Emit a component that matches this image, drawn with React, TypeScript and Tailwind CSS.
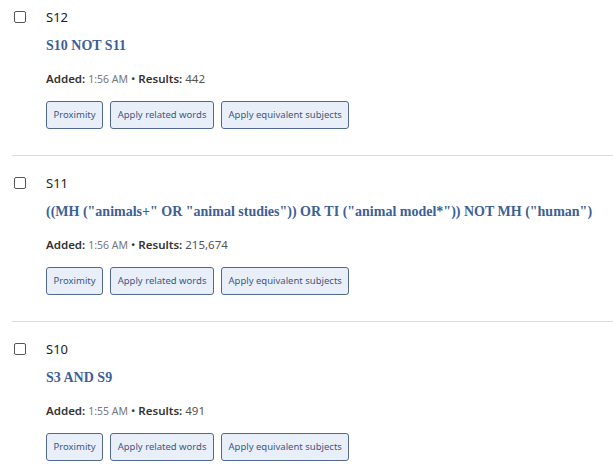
import React from "react";

type Item = { id: string; query: string; time: string; results: string };

const items: Item[] = [
  { id: "S12", query: "S10 NOT S11", time: "1:56 AM", results: "442" },
  {
    id: "S11",
    query: '((MH ("animals+" OR "animal studies")) OR TI ("animal model*")) NOT MH ("human")',
    time: "1:56 AM",
    results: "215,674",
  },
  { id: "S10", query: "S3 AND S9", time: "1:55 AM", results: "491" },
];

function Btn({ children }: { children: React.ReactNode }) {
  return (
    <button className="h-[28px] px-[6.5px] rounded-[3px] border border-[#52698f] bg-[#e9eff9] text-[9.5px] text-[#3e5782] leading-none whitespace-nowrap">
      {children}
    </button>
  );
}

function Row({ item, first, last }: { item: Item; first: boolean; last: boolean }) {
  return (
    <div className={"ml-[12px] " + (last ? "" : "border-b border-[#dcdcdc]")}>
      <div className={"flex items-start pb-[26px] " + (first ? "pt-[10px]" : "pt-[20px]")}>
        <div className="w-[34px] shrink-0 pl-[2px] pt-[1px]">
          <div className="w-[12px] h-[12px] border border-[#555] rounded-[2px] bg-white" />
        </div>
        <div className="flex flex-col min-w-0">
          <div className="text-[13px] leading-[14px] text-[#222]">{item.id}</div>
          <div
            className="mt-[14px] text-[14px] leading-[16px] font-bold text-[#3d5f97] whitespace-nowrap"
            style={{ fontFamily: '"Liberation Serif", serif' }}
          >
            {item.query}
          </div>
          <div className="mt-[19px] text-[11.5px] leading-[12px] text-[#333]">
            <span className="font-semibold">Added:</span>{" "}
            <span className="text-[10.5px] text-[#777]">{item.time}</span>{" "}
            <span>•</span> <span className="font-semibold">Results:</span>{" "}
            <span className="text-[#555]">{item.results}</span>
          </div>
          <div className="mt-[16px] flex gap-[7px]">
            <Btn>Proximity</Btn>
            <Btn>Apply related words</Btn>
            <Btn>Apply equivalent subjects</Btn>
          </div>
        </div>
      </div>
    </div>
  );
}

export default function App() {
  return (
    <div
      className="w-[613px] h-[472px] overflow-hidden bg-white"
      style={{ fontFamily: '"Noto Sans", sans-serif' }}
    >
      {items.map((it, i) => (
        <Row key={it.id} item={it} first={i === 0} last={i === items.length - 1} />
      ))}
    </div>
  );
}
